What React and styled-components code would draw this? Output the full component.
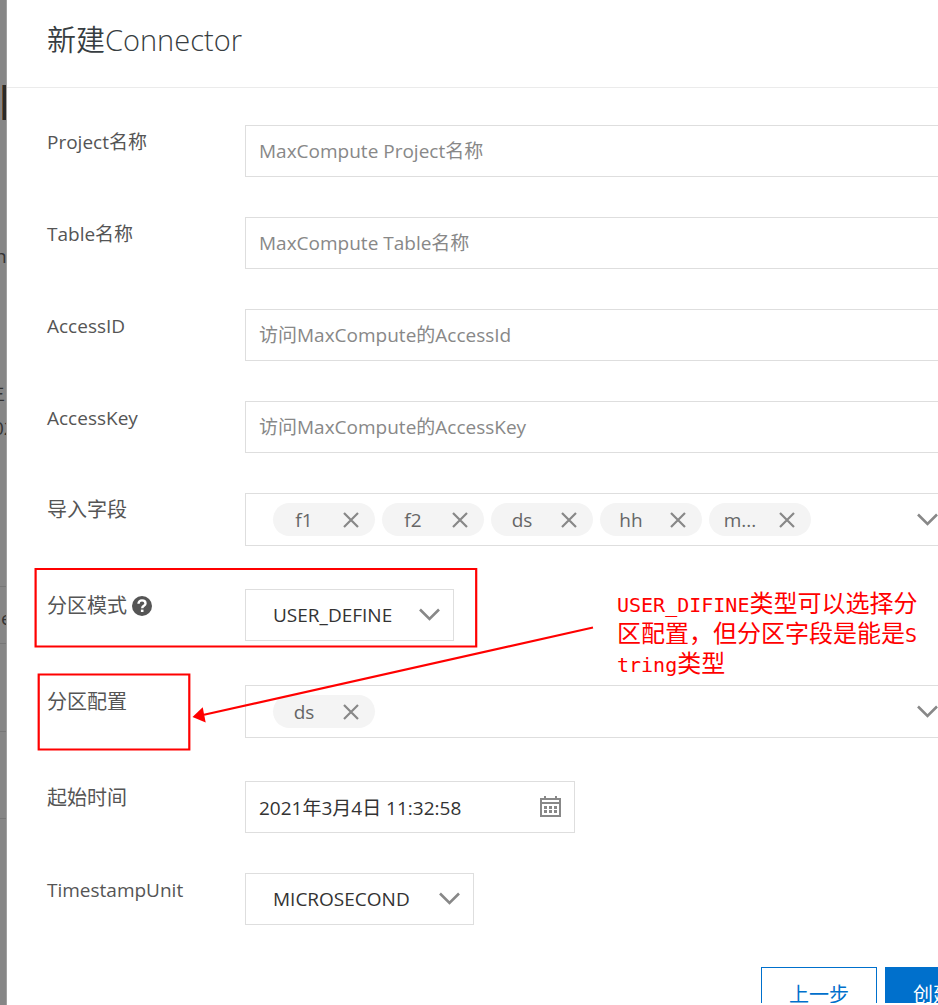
import React, { useState } from 'react';
import styled, { createGlobalStyle } from 'styled-components';

const GlobalStyle = createGlobalStyle`
  * {
    box-sizing: border-box;
  }
  body {
    margin: 0;
    background: #fff;
  }
  body, button, input, select {
    font-family: 'Open Sans', 'Noto Sans CJK SC', sans-serif;
    font-size: 19px;
  }
`;

const Screen = styled.div`
  position: relative;
  display: flex;
  height: 100vh;
  overflow: hidden;
`;

const Backdrop = styled.div`
  flex: 0 0 7px;
  overflow: hidden;
  background: #868686;
  border-right: 1px solid #a0a0a0;
  & svg {
    display: block;
  }
`;

const Drawer = styled.section`
  flex: 0 0 calc(100% + 60px);
  overflow: hidden;
  background: #fff;
  border-bottom: 2px solid #fff;
`;

const Header = styled.header`
  padding: 18px 40px 25px;
  border-bottom: 1px solid #ebebeb;
`;

const Title = styled.h1`
  margin: 0;
  font-size: 29px;
  font-weight: 350;
  line-height: 44px;
  color: #373d41;
`;

const Form = styled.form`
  display: flex;
  flex-direction: column;
  gap: 40px;
  padding: 37px 53px 42px 40px;
`;

const Row = styled.div`
  display: grid;
  grid-template-columns: 198px 1fr;
  align-items: start;
  min-height: ${props => (props.$tall ? 56 : 52)}px;
`;

const LabelCell = styled.div`
  display: flex;
  align-items: center;
  gap: 5px;
  font-size: ${props => (props.$cjk ? 20 : 19)}px;
  line-height: 34px;
  color: #555;
`;

const HelpButton = styled.button`
  display: flex;
  padding: 0;
  border: 0;
  background: none;
`;

const TextInput = styled.input`
  width: 100%;
  height: 52px;
  padding: 0 13px;
  border: 1px solid #dedede;
  outline: none;
  color: #333;
  &::placeholder {
    color: #888;
    opacity: 1;
  }
`;

const SelectBox = styled.div`
  display: inline-grid;
  width: ${props => props.$width}px;
  align-items: center;
  & > * {
    grid-area: 1 / 1;
  }
  & > svg {
    justify-self: end;
    margin-right: 14px;
    pointer-events: none;
  }
`;

const Select = styled.select`
  width: 100%;
  height: 52px;
  padding: 0 27px;
  appearance: none;
  border: 1px solid #dedede;
  border-radius: 0;
  background: #fff;
  color: #333;
`;

const TagBox = styled.div`
  display: flex;
  align-items: center;
  gap: 7px;
  padding: 9px 13px 9px 27px;
  border: 1px solid #dedede;
`;

const Tag = styled.span`
  display: flex;
  align-items: center;
  justify-content: space-between;
  width: 102px;
  height: 33px;
  padding: 0 16px 0 14px;
  border-radius: 17px;
  background: #f4f4f4;
  color: #666;
`;

const TagText = styled.span`
  width: 34px;
  text-align: center;
`;

const IconButton = styled.button`
  display: flex;
  padding: 0;
  border: 0;
  background: none;
`;

const OpenButton = styled(IconButton)`
  margin-left: auto;
`;

const DateBox = styled.div`
  display: flex;
  align-items: center;
  width: 330px;
  height: 52px;
  padding: 0 13px;
  border: 1px solid #dedede;
`;

const DateInput = styled.input`
  flex: 1;
  min-width: 0;
  padding: 0;
  border: 0;
  outline: none;
  color: #333;
`;

const Footer = styled.footer`
  display: flex;
  justify-content: flex-end;
  gap: 8px;
  padding: 0 24px;
`;

const Button = styled.button`
  height: 52px;
  padding: 0 27px;
  border: 1px solid #0070cc;
  background: ${props => (props.$primary ? '#0070cc' : '#fff')};
  color: ${props => (props.$primary ? '#fff' : '#0070cc')};
  font-size: 20px;
`;

const Marks = styled.svg`
  position: absolute;
  top: 0;
  left: 0;
  pointer-events: none;
`;

const Note = styled.p`
  position: absolute;
  top: 587px;
  left: 617px;
  width: 304px;
  margin: 0;
  color: #f00;
  font-family: 'Noto Sans CJK SC', sans-serif;
  font-size: 24px;
  line-height: 30px;
  word-break: break-all;
`;

const NoteLatin = styled.span`
  font-family: 'DejaVu Sans Mono', monospace;
  font-size: 20px;
  line-height: 20px;
`;

const Chevron = () => (
  <svg width="21" height="14" viewBox="0 0 21 14" fill="none" stroke="#888" strokeWidth="2.6">
    <path d="M1 1.500l9.500 9.500L20 1.500" />
  </svg>
);

const Cross = () => (
  <svg width="16" height="16" viewBox="0 0 16 16" fill="none" stroke="#888" strokeWidth="2.200">
    <path d="M1 1l14 14M15 1L1 15" />
  </svg>
);

const Calendar = () => (
  <svg width="21" height="22" viewBox="0 0 21 22" fill="#888">
    <path fillRule="evenodd" d="M0 2h4V0h2v2h9V0h2v2h4v19H0zM2 4v2h17V4zM2 8v11h17V8z" />
    <path d="M4 10h3v3H4zM9 10h3v3H9zM14 10h3v3h-3zM4 14h3v3H4zM9 14h3v3H9zM14 14h3v3h-3z" />
  </svg>
);

const Help = () => (
  <svg width="20" height="20" viewBox="0 0 20 20">
    <circle cx="10" cy="10" r="10" fill="#555" />
    <path
      d="M6.500 7.800c0-2.200 1.500-3.400 3.500-3.400s3.500 1.200 3.500 3c0 2.400-3.300 2.400-3.300 4.800"
      fill="none"
      stroke="#fff"
      strokeWidth="2.400"
    />
    <path d="M8.900 13.600h2.600V16H8.900z" fill="#fff" />
  </svg>
);

// slice of the dimmed page left of the drawer
const PageEdge = () => (
  <svg width="6" height="1005" viewBox="0 0 6 1005" fontSize="19" fill="#333">
    <path d="M2 85h4v35H2z" fill="#2a2a2a" />
    <path d="M2 85h1v35H2z" fill="#744f28" />
    <text x="-5" y="263">n</text>
    <text x="-14" y="400">主</text>
    <text x="-7" y="435">02</text>
    <text x="1" y="625">e</text>
    <path d="M0 586h6v1H0zM0 643h6v1H0zM0 731h6v1H0zM0 818h6v1H0z" fill="#777" />
  </svg>
);

const textFields = [
  { id: 'project', label: 'Project名称', placeholder: 'MaxCompute Project名称' },
  { id: 'table', label: 'Table名称', placeholder: 'MaxCompute Table名称' },
  { id: 'accessId', label: 'AccessID', placeholder: '访问MaxCompute的AccessId' },
  { id: 'accessKey', label: 'AccessKey', placeholder: '访问MaxCompute的AccessKey' },
];

function TagSelect({ labelledBy, initial }) {
  const [tags, setTags] = useState(initial);

  return (
    <TagBox role="group" aria-labelledby={labelledBy}>
      {tags.map(tag => (
        <Tag key={tag}>
          <TagText>{tag}</TagText>
          <IconButton
            type="button"
            aria-label={`移除 ${tag}`}
            onClick={() => setTags(tags.filter(t => t !== tag))}
          >
            <Cross />
          </IconButton>
        </Tag>
      ))}
      <OpenButton type="button" aria-label="展开">
        <Chevron />
      </OpenButton>
    </TagBox>
  );
}

export default function App() {
  return (
    <>
      <GlobalStyle />
      <Screen>
        <Backdrop aria-hidden="true">
          <PageEdge />
        </Backdrop>
        <Drawer>
          <Header>
            <Title>新建Connector</Title>
          </Header>
          <Form>
            {textFields.map(field => (
              <Row key={field.id}>
                <LabelCell>
                  <label htmlFor={field.id}>{field.label}</label>
                </LabelCell>
                <TextInput id={field.id} placeholder={field.placeholder} />
              </Row>
            ))}
            <Row $tall>
              <LabelCell $cjk id="fields">
                导入字段
              </LabelCell>
              <TagSelect labelledBy="fields" initial={['f1', 'f2', 'ds', 'hh', 'm...']} />
            </Row>
            <Row $tall>
              <LabelCell $cjk>
                <label htmlFor="mode">分区模式</label>
                <HelpButton type="button" aria-label="帮助">
                  <Help />
                </HelpButton>
              </LabelCell>
              <SelectBox $width={209}>
                <Select id="mode">
                  <option>USER_DEFINE</option>
                </Select>
                <Chevron />
              </SelectBox>
            </Row>
            <Row $tall>
              <LabelCell $cjk id="partition">
                分区配置
              </LabelCell>
              <TagSelect labelledBy="partition" initial={['ds']} />
            </Row>
            <Row>
              <LabelCell $cjk>
                <label htmlFor="start">起始时间</label>
              </LabelCell>
              <DateBox>
                <DateInput id="start" defaultValue="2021年3月4日 11:32:58" />
                <IconButton type="button" aria-label="选择日期">
                  <Calendar />
                </IconButton>
              </DateBox>
            </Row>
            <Row>
              <LabelCell>
                <label htmlFor="unit">TimestampUnit</label>
              </LabelCell>
              <SelectBox $width={229}>
                <Select id="unit">
                  <option>MICROSECOND</option>
                </Select>
                <Chevron />
              </SelectBox>
            </Row>
          </Form>
          <Footer>
            <Button type="button">上一步</Button>
            <Button type="button" $primary>
              创建
            </Button>
          </Footer>
        </Drawer>
        <Marks width="620" height="760" fill="none" stroke="#f00" strokeWidth="2.2">
          <path d="M35.600 569H476.200V646.500H35.600zM38.700 674.500H189.300V749.500H38.700zM593 627.500L204 714.800" />
          <path d="M192.500 717l10.200-9.700 3 15.300z" fill="#f00" stroke="none" />
        </Marks>
        <Note>
          <NoteLatin>USER_DIFINE</NoteLatin>
          类型可以选择分区配置，但分区字段是能是
          <NoteLatin>String</NoteLatin>
          类型
        </Note>
      </Screen>
    </>
  );
}
